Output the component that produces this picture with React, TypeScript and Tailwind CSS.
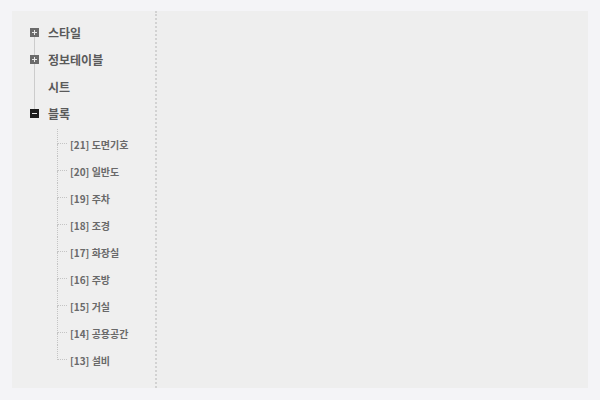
const font = { fontFamily: '"Noto Sans CJK KR", "Noto Sans", sans-serif' };

const topItems = [
  { label: '스타일', icon: 'plus' },
  { label: '정보테이블', icon: 'plus' },
  { label: '시트', icon: 'none' },
  { label: '블록', icon: 'minus' },
];

const blocks = [
  '[21] 도면기호',
  '[20] 일반도',
  '[19] 주차',
  '[18] 조경',
  '[17] 화장실',
  '[16] 주방',
  '[15] 거실',
  '[14] 공용공간',
  '[13] 설비',
];

function ToggleIcon({ kind }: { kind: string }) {
  if (kind === 'none') return <span className="w-[9px] h-[9px]" />;
  const dark = kind === 'minus';
  return (
    <span
      className={`relative z-10 flex items-center justify-center w-[9px] h-[9px] ${
        dark ? 'bg-[#1c1c1c]' : 'bg-[#6b6b6b]'
      }`}
    >
      <svg width="9" height="9" viewBox="0 0 9 9">
        <rect x="2" y="4" width="5" height="1" fill="#e8e8e8" />
        {!dark && <rect x="4" y="2" width="1" height="5" fill="#e8e8e8" />}
      </svg>
    </span>
  );
}

export default function App() {
  return (
    <div className="w-[600px] h-[400px] bg-[#f4f4f7] pt-[11px] pl-[12px] pr-[12px] pb-[12px]" style={font}>
      <div className="flex h-full bg-[#eeeeee]">
        {/* 트리 사이드바 */}
        <div className="w-[145px] h-full border-r-2 border-dotted border-[#d2d2d2] bg-[#efefef]">
          <div className="relative pt-[8px] pl-[18px]">
            <div className="absolute left-[22px] top-[24px] h-[76px] w-px bg-[#cccccc]" />
            {topItems.map((item) => (
              <div key={item.label} className="flex items-center h-[27px]">
                <ToggleIcon kind={item.icon} />
                <span className="ml-[9px] text-[12px] font-bold text-[#5a5a5a]">{item.label}</span>
              </div>
            ))}
            <div className="mt-[2px] ml-[27px]">
              {blocks.map((b, i) => (
                <div key={b} className="flex h-[27px]">
                  <div className="flex flex-col w-[10px]">
                    <div className="h-[15px] border-l border-b border-dotted border-[#c4c4c4]" />
                    <div
                      className={`flex-1 ${
                        i === blocks.length - 1 ? '' : 'border-l border-dotted border-[#c4c4c4]'
                      }`}
                    />
                  </div>
                  <span className="ml-[3px] mt-[3px] self-center text-[10px] font-bold text-[#696969]">{b}</span>
                </div>
              ))}
            </div>
          </div>
        </div>
        <div className="flex-1" />
      </div>
    </div>
  );
}
